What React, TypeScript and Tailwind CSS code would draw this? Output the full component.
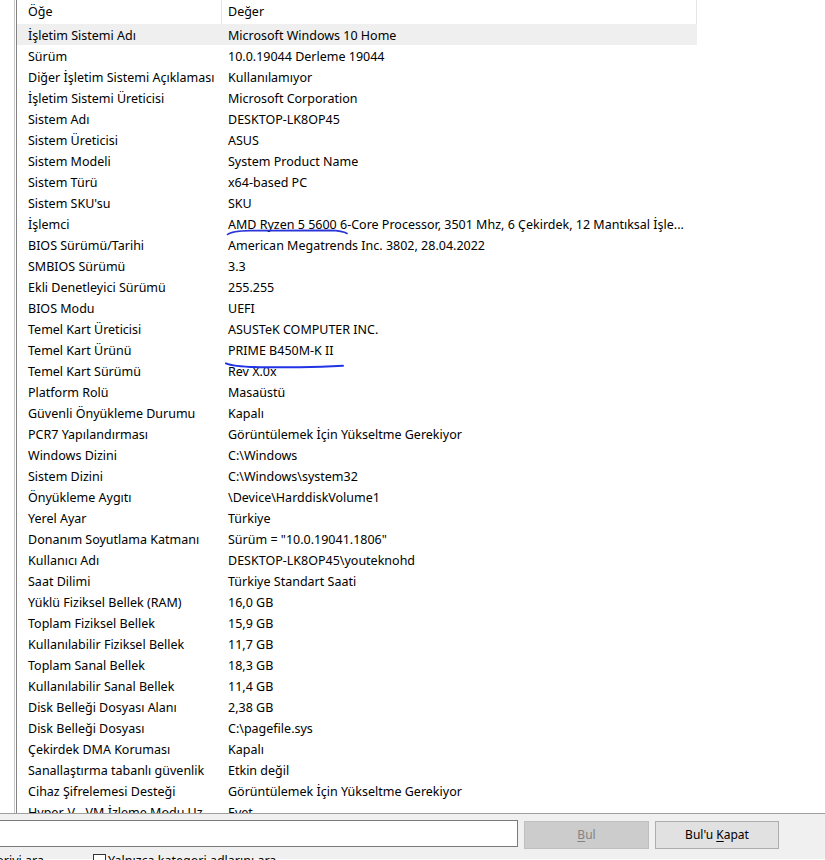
import React from "react";

type Row = [string, string];

const rows: Row[] = [
  ["İşletim Sistemi Adı", "Microsoft Windows 10 Home"],
  ["Sürüm", "10.0.19044 Derleme 19044"],
  ["Diğer İşletim Sistemi Açıklaması", "Kullanılamıyor"],
  ["İşletim Sistemi Üreticisi", "Microsoft Corporation"],
  ["Sistem Adı", "DESKTOP-LK8OP45"],
  ["Sistem Üreticisi", "ASUS"],
  ["Sistem Modeli", "System Product Name"],
  ["Sistem Türü", "x64-based PC"],
  ["Sistem SKU'su", "SKU"],
  ["İşlemci", "AMD Ryzen 5 5600 6-Core Processor, 3501 Mhz, 6 Çekirdek, 12 Mantıksal İşle..."],
  ["BIOS Sürümü/Tarihi", "American Megatrends Inc. 3802, 28.04.2022"],
  ["SMBIOS Sürümü", "3.3"],
  ["Ekli Denetleyici Sürümü", "255.255"],
  ["BIOS Modu", "UEFI"],
  ["Temel Kart Üreticisi", "ASUSTeK COMPUTER INC."],
  ["Temel Kart Ürünü", "PRIME B450M-K II"],
  ["Temel Kart Sürümü", "Rev X.0x"],
  ["Platform Rolü", "Masaüstü"],
  ["Güvenli Önyükleme Durumu", "Kapalı"],
  ["PCR7 Yapılandırması", "Görüntülemek İçin Yükseltme Gerekiyor"],
  ["Windows Dizini", "C:\\Windows"],
  ["Sistem Dizini", "C:\\Windows\\system32"],
  ["Önyükleme Aygıtı", "\\Device\\HarddiskVolume1"],
  ["Yerel Ayar", "Türkiye"],
  ["Donanım Soyutlama Katmanı", 'Sürüm = "10.0.19041.1806"'],
  ["Kullanıcı Adı", "DESKTOP-LK8OP45\\youteknohd"],
  ["Saat Dilimi", "Türkiye Standart Saati"],
  ["Yüklü Fiziksel Bellek (RAM)", "16,0 GB"],
  ["Toplam Fiziksel Bellek", "15,9 GB"],
  ["Kullanılabilir Fiziksel Bellek", "11,7 GB"],
  ["Toplam Sanal Bellek", "18,3 GB"],
  ["Kullanılabilir Sanal Bellek", "11,4 GB"],
  ["Disk Belleği Dosyası Alanı", "2,38 GB"],
  ["Disk Belleği Dosyası", "C:\\pagefile.sys"],
  ["Çekirdek DMA Koruması", "Kapalı"],
  ["Sanallaştırma tabanlı güvenlik", "Etkin değil"],
  ["Cihaz Şifrelemesi Desteği", "Görüntülemek İçin Yükseltme Gerekiyor"],
  ["Hyper-V - VM İzleme Modu Uz...", "Evet"],
];

const App: React.FC = () => {
  return (
    <div className="relative w-[825px] h-[860px] overflow-hidden bg-white text-[12.5px] text-black font-['Noto_Sans',sans-serif]">
      {/* Tree pane + system summary list */}
      <div className="flex h-[814px] border-b border-[#a0a0a0]">
        <div className="w-[15px] shrink-0 border-r border-[#c8c8c8] bg-white" />
        <div className="ml-px flex-1 overflow-hidden border-l border-[#828282]">
          <div className="flex h-6 items-center">
            <div className="w-[205px] h-full flex items-center pl-[11px] pt-px border-r border-[#e5e5e5]">Öğe</div>
            <div className="w-[475px] h-full flex items-center pl-[6px] pt-px border-r border-[#e5e5e5]">Değer</div>
          </div>
          {rows.map(([name, value], i) => (
            <div
              key={name}
              className={`flex h-[21px] w-[680px] items-center pt-[4px] whitespace-nowrap ${i === 0 ? "bg-[#efefef]" : ""}`}
            >
              <div className="w-[205px] shrink-0 overflow-hidden pl-[11px]">{name}</div>
              <div className="w-[475px] shrink-0 overflow-hidden pl-[6px]">{value}</div>
            </div>
          ))}
        </div>
      </div>

      {/* Find bar */}
      <div className="h-[45px] bg-[#f0f0f0] text-[12px]">
        <div className="flex items-start pt-[6px]">
          <div className="ml-[-12px] w-[530px] h-[27px] border border-[#7a7a7a] bg-white" />
          <button className="ml-[6px] mt-px w-[125px] h-[28px] border border-[#bfbfbf] bg-[#cccccc] text-[#838383]">
            <span className="underline underline-offset-2">B</span>ul
          </button>
          <button className="ml-[6px] mt-px w-[124px] h-[28px] border border-[#adadad] bg-[#e1e1e1]">
            Bul'u <span className="underline underline-offset-2">K</span>apat
          </button>
        </div>
        <div className="mt-[4px] flex items-start leading-[16px] text-[12.5px]">
          <div className="w-[44px] flex justify-end overflow-hidden whitespace-nowrap">Yalnızca seçili kategoriyi ara</div>
          <div className="ml-[49px] mt-px w-[13px] h-[13px] border border-[#333333] bg-white" />
          <div className="ml-[2px] whitespace-nowrap">Yalnızca kategori adlarını ara</div>
        </div>
      </div>

      {/* Pen marks over the list */}
      <svg className="pointer-events-none absolute left-0 top-0" width="825" height="860">
        <path
          d="M227.5 234.5 C 231 231.5, 238 230.8, 250 230.6 L 330 230.4 C 338 230.6, 344 231.5, 347 233.5"
          fill="none"
          stroke="#2a35d8"
          strokeWidth="1.6"
          strokeLinecap="round"
        />
        <path
          d="M226 363.3 C 231 365.5, 243 367, 265 367.3 L 300 367.2 C 320 367, 334 366.3, 343 365.8"
          fill="none"
          stroke="#2233e6"
          strokeWidth="2"
          strokeLinecap="round"
        />
      </svg>
    </div>
  );
};

export default App;
